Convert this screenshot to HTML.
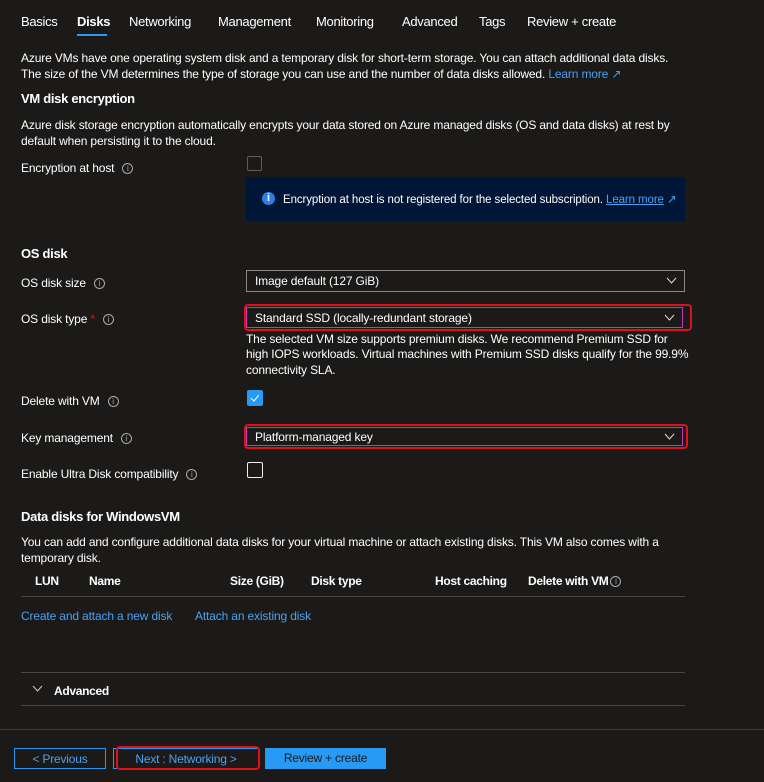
<!DOCTYPE html>
<html><head><meta charset="utf-8"><style>
body{margin:0;width:764px;height:782px;background:#1b1a19;color:#fff;font-family:"Liberation Sans",sans-serif;font-size:12px;overflow:hidden;position:relative}
.t{position:absolute;white-space:nowrap;line-height:16px;letter-spacing:-0.15px;margin-top:1px}
.tab{position:absolute;top:14px;font-size:13px;line-height:16px;white-space:nowrap;letter-spacing:-0.3px}
.h{font-weight:bold;font-size:13px;letter-spacing:-0.3px}
.i{display:inline-block;width:9px;height:9px;border:1px solid #aaa;border-radius:50%;font-size:8px;line-height:9px;text-align:center;color:#aaa;vertical-align:middle;margin-left:8px;font-weight:normal;letter-spacing:0}
.link{color:#4ba0f0}
.dd{position:absolute;left:246px;width:439px;height:21px;border:1px solid #8a8886;box-sizing:border-box}
.dd span{position:absolute;left:8px;top:3px;white-space:nowrap;letter-spacing:-0.15px}
.dd svg{position:absolute;right:7px;top:6px}
.red{position:absolute;border:2px solid #e0101c;border-radius:4px}
.line{position:absolute;height:1px;background:#484644}
.btn{position:absolute;top:748px;height:21px;box-sizing:border-box;text-align:center;line-height:20px;letter-spacing:-0.2px}
</style></head><body>
<div class="tab" style="left:21px">Basics</div>
<div class="tab" style="left:77px;font-weight:bold">Disks</div>
<div style="position:absolute;left:77px;top:34px;width:30px;height:2px;background:#2899f5"></div>
<div class="tab" style="left:129px">Networking</div>
<div class="tab" style="left:218px">Management</div>
<div class="tab" style="left:316px">Monitoring</div>
<div class="tab" style="left:402px">Advanced</div>
<div class="tab" style="left:479px">Tags</div>
<div class="tab" style="left:527px">Review + create</div>

<div class="t" style="left:21px;top:49px">Azure VMs have one operating system disk and a temporary disk for short-term storage. You can attach additional data disks.</div>
<div class="t" style="left:21px;top:65px">The size of the VM determines the type of storage you can use and the number of data disks allowed. <span class="link">Learn more ↗</span></div>
<div class="t h" style="left:21px;top:90px">VM disk encryption</div>
<div class="t" style="left:21px;top:116px">Azure disk storage encryption automatically encrypts your data stored on Azure managed disks (OS and data disks) at rest by</div>
<div class="t" style="left:21px;top:132px">default when persisting it to the cloud.</div>
<div class="t" style="left:21px;top:159px">Encryption at host<span class="i">i</span></div>
<div style="position:absolute;left:247px;top:156px;width:15px;height:15px;border:1px solid #605e5c;border-radius:2px;box-sizing:border-box"></div>
<div style="position:absolute;left:246px;top:177px;width:439px;height:44px;background:#001637"></div>
<div style="position:absolute;left:262px;top:192px;width:13px;height:13px;border-radius:50%;background:#2d7fe6;color:#fff;font-size:11px;font-weight:bold;text-align:center;line-height:13px">i</div>
<div class="t" style="left:283px;top:191px;font-size:11.5px;letter-spacing:-0.1px">Encryption at host is not registered for the selected subscription. <span class="link" style="text-decoration:underline">Learn more</span> <span class="link">↗</span></div>

<div class="t h" style="left:21px;top:245px">OS disk</div>
<div class="t" style="left:21px;top:274px">OS disk size<span class="i">i</span></div>
<div class="dd" style="top:270px;height:22px"><span>Image default (127 GiB)</span><svg width="11" height="8"><path d="M1 1l4.5 5L10 1" stroke="#ddd" fill="none"/></svg></div>
<div class="t" style="left:21px;top:310px">OS disk type <span style="color:#e0101c">*</span><span class="i">i</span></div>
<div class="red" style="left:244px;top:304px;width:444px;height:23px"></div>
<div class="dd" style="top:307px;width:437px;border-color:#c239b3"><span>Standard SSD (locally-redundant storage)</span><svg width="11" height="8"><path d="M1 1l4.5 5L10 1" stroke="#ddd" fill="none"/></svg></div>
<div class="t" style="left:246px;top:330px">The selected VM size supports premium disks. We recommend Premium SSD for</div>
<div class="t" style="left:246px;top:345px">high IOPS workloads. Virtual machines with Premium SSD disks qualify for the 99.9%</div>
<div class="t" style="left:246px;top:361px">connectivity SLA.</div>
<div class="t" style="left:21px;top:392px">Delete with VM<span class="i">i</span></div>
<div style="position:absolute;left:247px;top:390px;width:16px;height:16px;background:#2899f5;border-radius:2px"><svg width="16" height="16"><path d="M4 8l3 3 5-6" stroke="#fff" stroke-width="1" fill="none"/></svg></div>
<div class="t" style="left:21px;top:429px">Key management<span class="i">i</span></div>
<div class="red" style="left:244px;top:424px;width:440px;height:21px"></div>
<div class="dd" style="top:427px;width:437px;height:19px;border-color:#c239b3"><span style="top:2px">Platform-managed key</span><svg width="11" height="8" style="top:5px"><path d="M1 1l4.5 5L10 1" stroke="#ddd" fill="none"/></svg></div>
<div class="t" style="left:21px;top:465px">Enable Ultra Disk compatibility<span class="i">i</span></div>
<div style="position:absolute;left:247px;top:462px;width:16px;height:16px;border:1px solid #eee;border-radius:2px;box-sizing:border-box"></div>

<div class="t h" style="left:21px;top:508px">Data disks for WindowsVM</div>
<div class="t" style="left:21px;top:533px">You can add and configure additional data disks for your virtual machine or attach existing disks. This VM also comes with a</div>
<div class="t" style="left:21px;top:549px">temporary disk.</div>
<div class="t h" style="left:35px;top:572px;font-size:12px">LUN</div>
<div class="t h" style="left:89px;top:572px;font-size:12px">Name</div>
<div class="t h" style="left:230px;top:572px;font-size:12px">Size (GiB)</div>
<div class="t h" style="left:311px;top:572px;font-size:12px">Disk type</div>
<div class="t h" style="left:435px;top:572px;font-size:12px">Host caching</div>
<div class="t h" style="left:528px;top:572px;font-size:12px">Delete with VM<span class="i" style="margin-left:2px">i</span></div>
<div class="line" style="left:21px;top:596px;width:664px"></div>
<div class="t link" style="left:21px;top:607px">Create and attach a new disk</div>
<div class="t link" style="left:195px;top:607px">Attach an existing disk</div>
<div class="line" style="left:21px;top:672px;width:664px"></div>
<svg style="position:absolute;left:32px;top:685px" width="11" height="8"><path d="M1 1l4.5 5L10 1" stroke="#ccc" fill="none"/></svg>
<div class="t h" style="left:54px;top:682px;font-size:12px">Advanced</div>
<div class="line" style="left:21px;top:705px;width:664px"></div>
<div class="line" style="left:0;top:729px;width:764px;background:#3b3a39"></div>
<div class="btn" style="left:14px;width:92px;border:1px solid #2899f5;color:#4ba0f0">&lt; Previous</div>
<div class="btn" style="left:113px;width:146px;border:1px solid #2899f5;color:#4ba0f0">Next : Networking &gt;</div>
<div class="red" style="left:116px;top:746px;width:140px;height:20px"></div>
<div class="btn" style="left:265px;width:121px;background:#2899f5;color:#1b1a19">Review + create</div>
</body></html>
